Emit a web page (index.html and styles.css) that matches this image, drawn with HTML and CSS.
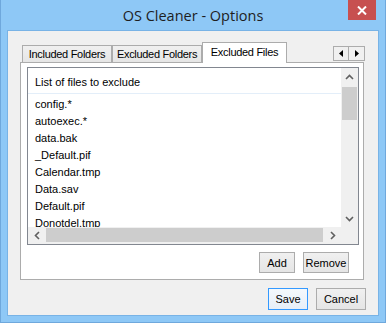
FILE: index.html
```html
<!DOCTYPE html>
<html lang="en">
<head>
    <meta charset="UTF-8">
    <title>OS Cleaner - Options</title>
    <link rel="stylesheet" href="styles.css">
</head>
<body>
    <div class="window">
        <div class="titlebar">
            <span></span>
            <span class="title">OS Cleaner - Options</span>
            <button class="close" title="Close">
                <svg width="10" height="9" viewBox="0 0 10 9"><path d="M1 0.5 L9 8.5 M9 0.5 L1 8.5" stroke="#fff" stroke-width="2"/></svg>
            </button>
        </div>
        <div class="client">
            <div class="tabs">
                <div class="tabstrip">
                    <div class="tab">Included Folders</div>
                    <div class="tab">Excluded Folders</div>
                    <div class="tab active">Excluded Files</div>
                    <div class="tab-scroll">
                        <span><svg width="4" height="7" viewBox="0 0 4 7"><path d="M4 0 L0 3.5 L4 7 Z" fill="#000"/></svg></span>
                        <span><svg width="4" height="7" viewBox="0 0 4 7"><path d="M0 0 L4 3.5 L0 7 Z" fill="#000"/></svg></span>
                    </div>
                </div>
                <div class="tabpage">
                    <div class="listview">
                        <div class="lv-content">
                            <div class="lv-header">List of files to exclude</div>
                            <ul class="lv-items">
                                <li>config.*</li>
                                <li>autoexec.*</li>
                                <li>data.bak</li>
                                <li>_Default.pif</li>
                                <li>Calendar.tmp</li>
                                <li>Data.sav</li>
                                <li>Default.pif</li>
                                <li>Donotdel.tmp</li>
                            </ul>
                        </div>
                        <div class="vscroll">
                            <span class="arrow"><svg width="9" height="6" viewBox="0 0 9 6"><path d="M1 5 L4.5 1.5 L8 5" fill="none" stroke="#606060" stroke-width="1.6"/></svg></span>
                            <span class="track"><span class="thumb"></span></span>
                            <span class="arrow"><svg width="9" height="6" viewBox="0 0 9 6"><path d="M1 1 L4.5 4.5 L8 1" fill="none" stroke="#606060" stroke-width="1.6"/></svg></span>
                        </div>
                        <div class="hscroll">
                            <span class="arrow"><svg width="6" height="9" viewBox="0 0 6 9"><path d="M5 1 L1.5 4.5 L5 8" fill="none" stroke="#606060" stroke-width="1.6"/></svg></span>
                            <span class="track"><span class="thumb"></span></span>
                            <span class="arrow"><svg width="6" height="9" viewBox="0 0 6 9"><path d="M1 1 L4.5 4.5 L1 8" fill="none" stroke="#606060" stroke-width="1.6"/></svg></span>
                        </div>
                        <div class="corner"></div>
                    </div>
                    <div class="page-buttons">
                        <button class="btn btn-add">Add</button>
                        <button class="btn btn-remove">Remove</button>
                    </div>
                </div>
            </div>
            <div class="dialog-buttons">
                <button class="btn btn-save default">Save</button>
                <button class="btn btn-cancel">Cancel</button>
            </div>
        </div>
    </div>
</body>
</html>
```

FILE: styles.css
```css
body {
    margin: 0;
    padding: 0;
    font-family: "Liberation Sans", Arial, sans-serif;
    font-size: 11px;
    color: #000;
}
.window {
    width: 386px;
    height: 323px;
    box-sizing: border-box;
    background-color: #8ec8f6;
    border: 1px solid #6fa8dc;
    border-top: none;
    display: flex;
    flex-direction: column;
}
.titlebar {
    height: 30px;
    display: grid;
    grid-template-columns: 1fr auto 1fr;
    align-items: start;
}
.title {
    font-family: "Open Sans", "Noto Sans", sans-serif;
    font-size: 14.5px;
    line-height: 31px;
    color: #1e1e1e;
}
.close {
    justify-self: end;
    width: 28px;
    height: 20px;
    margin-right: 9px;
    border: none;
    padding: 0;
    background-color: #c75050;
    display: flex;
    align-items: center;
    justify-content: center;
}
.client {
    flex: 1;
    margin: 0 6px 6px 6px;
    border: 1px solid #78b3e6;
    background-color: #f0f0f0;
    padding: 11px 12px 0 12px;
    display: flex;
    flex-direction: column;
}
.tabs {
    width: 344px;
}
.tabstrip {
    height: 20px;
    display: flex;
    align-items: flex-end;
    padding-left: 2px;
}
.tab {
    box-sizing: border-box;
    width: 90px;
    height: 17px;
    border: 1px solid #acacac;
    border-bottom: none;
    background: linear-gradient(#f0f0f0, #e5e5e5);
    text-align: center;
    line-height: 17px;
    letter-spacing: -0.3px;
}
.tab.active {
    width: 85px;
    height: 21px;
    margin-bottom: -1px;
    position: relative;
    z-index: 1;
    background: #fff;
    line-height: 18px;
}
.tab-scroll {
    align-self: flex-start;
    margin: 4px -1px 0 auto;
    display: flex;
}
.tab-scroll span {
    box-sizing: border-box;
    width: 16px;
    height: 15px;
    border: 1px solid #acacac;
    background-color: #f0f0f0;
    display: flex;
    align-items: center;
    justify-content: center;
}
.tab-scroll span + span {
    border-left: none;
}
.tabpage {
    box-sizing: border-box;
    height: 218px;
    border: 1px solid #acacac;
    background-color: #fff;
    padding: 4px 4px 6px 6px;
}
.listview {
    box-sizing: border-box;
    height: 178px;
    border: 1px solid #828790;
    display: grid;
    grid-template-columns: 1fr 17px;
    grid-template-rows: 1fr 17px;
    overflow: hidden;
}
.lv-content {
    overflow: hidden;
    background-color: #fff;
}
.lv-header {
    height: 26px;
    border-bottom: 1px solid #e3eef9;
    padding: 3px 0 0 7px;
    box-sizing: border-box;
    line-height: 23px;
}
.lv-items {
    list-style: none;
    margin: 2px 0 0 0;
    padding: 0;
}
.lv-items li {
    height: 17px;
    line-height: 17px;
    padding-left: 7px;
}
.vscroll {
    grid-row: 1;
    grid-column: 2;
    background-color: #f0f0f0;
    display: grid;
    grid-template-rows: 17px 1fr 17px;
}
.hscroll {
    grid-row: 2;
    grid-column: 1;
    background-color: #f0f0f0;
    display: grid;
    grid-template-columns: 17px 1fr 17px;
}
.corner {
    background-color: #f0f0f0;
}
.arrow {
    display: flex;
    align-items: center;
    justify-content: center;
}
.track {
    display: flex;
}
.vscroll .thumb {
    width: 15px;
    height: 33px;
    margin: 2px 1px 0 1px;
    background-color: #cdcdcd;
}
.hscroll .thumb {
    flex: 1;
    height: 14px;
    margin: 1px 1px 0 1px;
    background-color: #cdcdcd;
}
.btn {
    box-sizing: border-box;
    height: 21px;
    padding: 0;
    border: 1px solid #acacac;
    background: linear-gradient(#f0f0f0, #e5e5e5);
    font-family: inherit;
    font-size: 11px;
    color: #000;
}
.page-buttons {
    display: flex;
    justify-content: flex-end;
    gap: 8px;
    margin: 7px 10px 0 0;
}
.btn-add {
    width: 36px;
}
.btn-remove {
    width: 46px;
}
.dialog-buttons {
    display: flex;
    justify-content: flex-end;
    gap: 8px;
    margin-top: 8px;
}
.dialog-buttons .btn {
    height: 22px;
}
.btn-save {
    width: 40px;
}
.btn-cancel {
    width: 50px;
}
.btn.default {
    border-color: #3399ff;
    background: linear-gradient(#f4f8fc, #e6eef8);
}
```
